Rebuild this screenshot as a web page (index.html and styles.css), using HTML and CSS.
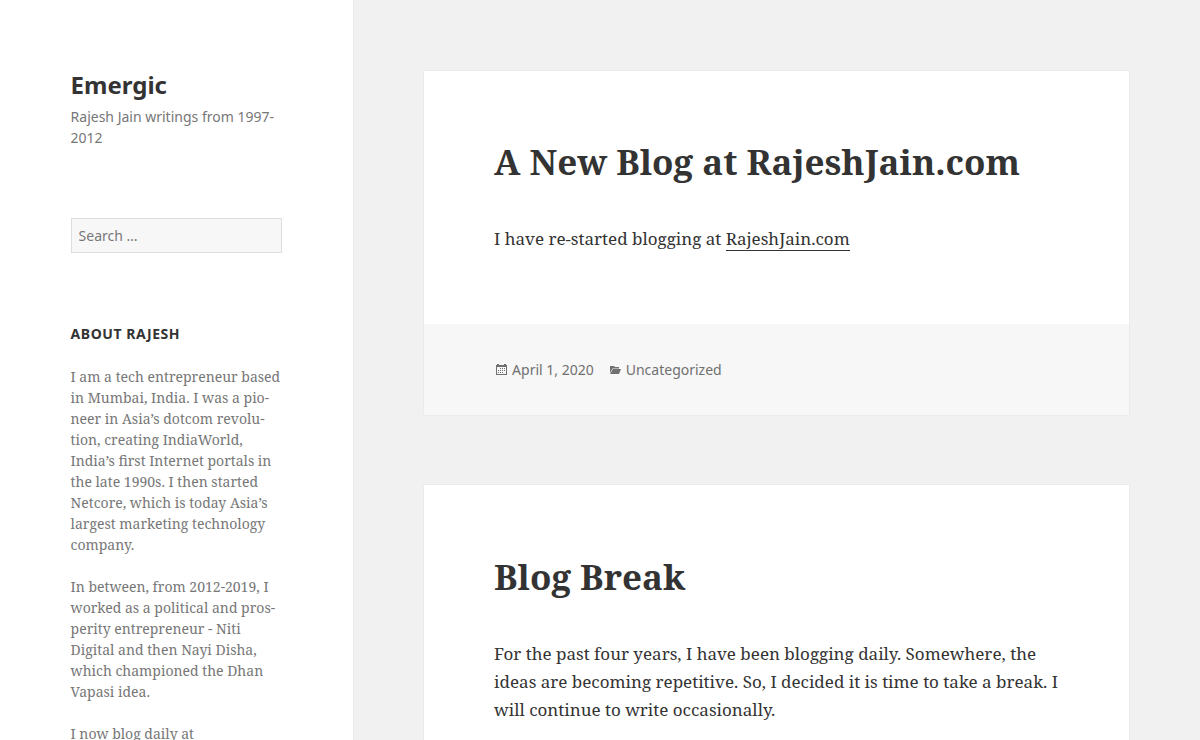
FILE: index.html
```html
<!DOCTYPE html>
<html lang="en-US">
<head>
    <meta charset="UTF-8">
    <meta name="viewport" content="width=device-width, initial-scale=1.0">
    <title>Emergic</title>
    <link rel="stylesheet" href="styles.css">
</head>
<body>
<div class="site">
    <div class="sidebar">
        <header class="site-header">
            <h1 class="site-title"><a href="#">Emergic</a></h1>
            <p class="site-description">Rajesh Jain writings from 1997-2012</p>
        </header>
        <form class="search-form" role="search">
            <input type="search" class="search-field" placeholder="Search …" aria-label="Search for:">
        </form>
        <aside class="widget">
            <h2 class="widget-title">About Rajesh</h2>
            <p>I am a tech entrepreneur based in Mumbai, India. I was a pio&shy;neer in Asia’s dotcom revolu&shy;tion, creating IndiaWorld, India’s first Internet portals in the late 1990s. I then started Netcore, which is today Asia’s largest marketing technology company.</p>
            <p>In between, from 2012-2019, I worked as a political and pros&shy;perity entrepreneur - Niti Digital and then Nayi Disha, which championed the Dhan Vapasi idea.</p>
            <p>I now blog daily at</p>
        </aside>
    </div>
    <main class="content">
        <article class="post">
            <div class="post-body">
                <h2 class="entry-title"><a href="#">A New Blog at RajeshJain.com</a></h2>
                <p>I have re-started blogging at <a class="text-link" href="#">RajeshJain.com</a></p>
            </div>
            <footer class="entry-footer">
                <a class="meta" href="#">
                    <svg class="icon" viewBox="0 -1 16 16" aria-hidden="true">
                        <path fill-rule="evenodd" d="M2 3h1V2h2v1h5V2h2v1h1v10H2zM3 5v7h9V5z"/>
                        <path d="M6 6h1v1H6zM8 6h1v1H8zM10 6h1v1h-1zM4 8h1v1H4zM6 8h1v1H6zM8 8h1v1H8zM10 8h1v1h-1zM4 10h1v1H4zM6 10h1v1H6zM8 10h1v1H8z"/>
                    </svg>
                    <time datetime="2020-04-01">April 1, 2020</time>
                </a>
                <a class="meta" href="#">
                    <svg class="icon" viewBox="0 -1 16 16" aria-hidden="true">
                        <path d="M2 4h4l1 1h4v1.500H4.500L2 11z"/>
                        <path d="M5 7h8l-2 5H2z"/>
                    </svg>
                    Uncategorized
                </a>
            </footer>
        </article>
        <article class="post">
            <div class="post-body">
                <h2 class="entry-title"><a href="#">Blog Break</a></h2>
                <p>For the past four years, I have been blogging daily. Somewhere, the ideas are becoming repetitive. So, I decided it is time to take a break. I will continue to write occasionally.</p>
            </div>
        </article>
    </main>
</div>
</body>
</html>
```
FILE: styles.css
```css
* {
    box-sizing: border-box;
}

body {
    margin: 0;
    background: #f1f1f1;
    color: #333;
    font-family: "Noto Serif", "Droid Serif", serif;
    font-size: 17px;
    line-height: 28px;
}

h1,
h2,
p {
    margin: 0;
}

a {
    color: inherit;
    text-decoration: none;
}

.site {
    display: grid;
    grid-template-columns: 5fr 12fr;
    min-height: 100vh;
}

/* Sidebar */
.sidebar {
    display: flex;
    flex-direction: column;
    gap: 70px;
    padding: 20%;
    background: #fff;
    box-shadow: 0 0 1px rgba(0, 0, 0, 0.15);
    color: #777;
    font-size: 14px;
    line-height: 21px;
}

.site-title {
    margin-bottom: 7px;
    color: #333;
    font-family: "Noto Sans", sans-serif;
    font-size: 24px;
    line-height: 28px;
}

.site-description {
    font-family: "Noto Sans", sans-serif;
}

.search-field {
    display: block;
    width: 100%;
    height: 35px;
    padding: 0 7px;
    border: 1px solid #ddd;
    border-radius: 0;
    background: #f7f7f7;
    color: #707070;
    font-family: "Noto Sans", sans-serif;
    font-size: 14px;
    appearance: none;
}

.search-field::placeholder {
    color: #777;
}

.widget p {
    margin-top: 21px;
}

.widget-title {
    color: #333;
    font-family: "Noto Sans", sans-serif;
    font-size: 14px;
    line-height: 22px;
    letter-spacing: 0.04em;
    text-transform: uppercase;
}

/* Posts */
.content {
    padding: 8.3333%;
}

.post {
    margin-bottom: 10%;
    background: #fff;
    box-shadow: 0 0 1px rgba(0, 0, 0, 0.15);
}

.post-body {
    padding: 10%;
}

.entry-title {
    margin-bottom: 42px;
    font-size: 35px;
    line-height: 42px;
}

.text-link {
    border-bottom: 1px solid #333;
}

.entry-footer {
    display: flex;
    flex-wrap: wrap;
    gap: 14px;
    padding: 35px 10%;
    background: #f7f7f7;
    color: #707070;
    font-family: "Noto Sans", sans-serif;
    font-size: 14px;
    line-height: 21px;
}

.meta {
    display: flex;
    align-items: center;
    gap: 2px;
}

.icon {
    width: 16px;
    height: 16px;
    fill: currentColor;
}
```
